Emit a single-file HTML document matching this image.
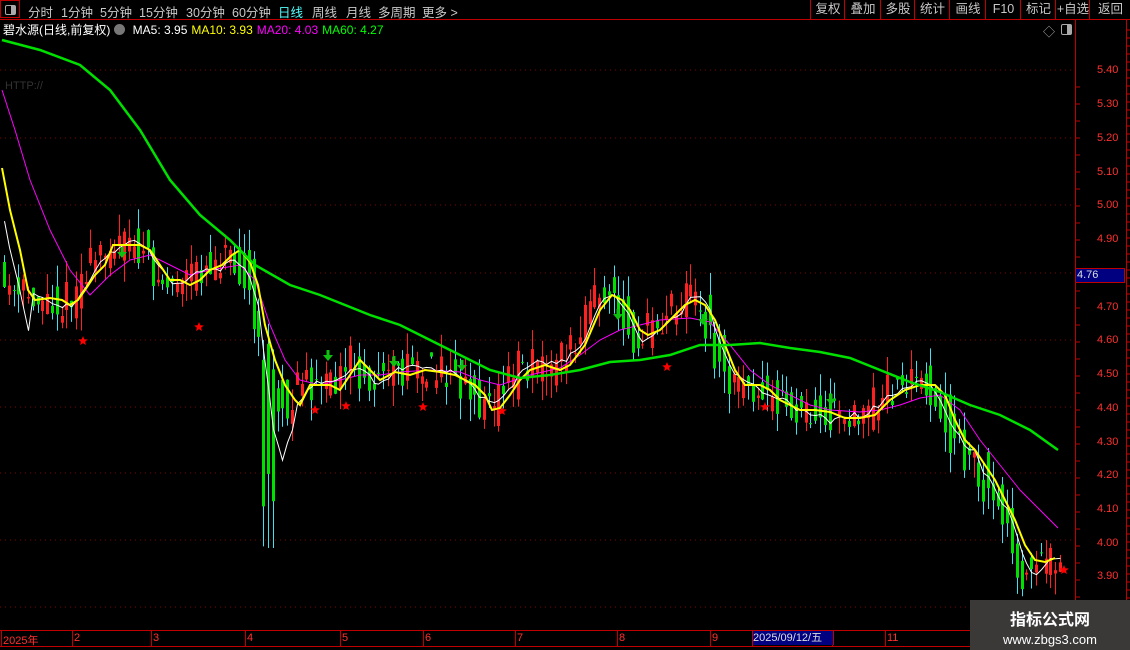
<!DOCTYPE html>
<html><head><meta charset="utf-8">
<style>
html,body{margin:0;padding:0;background:#000;width:1130px;height:650px;overflow:hidden;font-family:"Liberation Sans","Noto Sans CJK SC",sans-serif}
#top{position:absolute;left:0;top:0;width:1130px;height:19px;border-bottom:1px solid #c00000}
.t{position:absolute;top:2px;font-size:12.5px;color:#c8c8c8;white-space:nowrap}
.btn{position:absolute;top:0;height:19px;border-left:1px solid #c00000;color:#c8c8c8;font-size:12.5px;text-align:center;line-height:19px}
#info{position:absolute;left:3px;top:21px;font-size:12px;white-space:nowrap;color:#fff}
#info span{margin-right:4px}
.ax{position:absolute;font-size:11px;color:#ff3030;left:1097px}
.m{position:absolute;top:632px;font-size:11px;color:#ff3030}
</style></head><body>
<div id="top">
<div style="position:absolute;left:0;top:0;width:20px;height:18px;border:1px solid #c00000;box-sizing:border-box"><div style="position:absolute;left:4px;top:4px;width:9px;height:8px;border:1px solid #aaa;border-radius:2px"><div style="position:absolute;right:0;top:0;width:4px;height:8px;background:#aaa"></div></div></div>
<div class="t" style="left:28px">分时</div><div class="t" style="left:61px">1分钟</div><div class="t" style="left:100px">5分钟</div><div class="t" style="left:139px">15分钟</div><div class="t" style="left:186px">30分钟</div><div class="t" style="left:232px">60分钟</div><div class="t" style="left:278px;color:#5ff">日线</div><div class="t" style="left:312px">周线</div><div class="t" style="left:346px">月线</div><div class="t" style="left:378px">多周期</div><div class="t" style="left:422px">更多 &gt;</div>
<div class="btn" style="left:810px;width:34px">复权</div><div class="btn" style="left:844px;width:36px">叠加</div><div class="btn" style="left:880px;width:34px">多股</div><div class="btn" style="left:914px;width:35px">统计</div><div class="btn" style="left:949px;width:36px">画线</div><div class="btn" style="left:985px;width:35px">F10</div><div class="btn" style="left:1020px;width:35px">标记</div><div class="btn" style="left:1055px;width:34px">+自选</div><div class="btn" style="left:1089px;width:41px">返回</div>
</div>
<div id="info"><span>碧水源(日线,前复权)</span><span style="display:inline-block;width:11px;height:11px;border-radius:6px;background:#777;vertical-align:-1px"></span> <span>MA5: 3.95</span><span style="color:#ff0">MA10: 3.93</span><span style="color:#f0f">MA20: 4.03</span><span style="color:#0f0">MA60: 4.27</span></div>
<div style="position:absolute;left:1043px;top:23px;color:#aaa;font-size:12px">◇</div>
<div style="position:absolute;left:1061px;top:24px;width:9px;height:9px;border:1px solid #aaa;border-radius:2px"><div style="position:absolute;right:0;top:0;width:4px;height:9px;background:#aaa"></div></div>
<div style="position:absolute;left:5px;top:80px;color:#333;font-size:11px">HTTP://</div>
<svg id="c" width="1130" height="650" style="position:absolute;left:0;top:0"></svg>
<div class="ax" style="top:64px">5.40</div><div class="ax" style="top:98px">5.30</div><div class="ax" style="top:132px">5.20</div><div class="ax" style="top:166px">5.10</div><div class="ax" style="top:199px">5.00</div><div class="ax" style="top:233px">4.90</div><div class="ax" style="top:301px">4.70</div><div class="ax" style="top:334px">4.60</div><div class="ax" style="top:368px">4.50</div><div class="ax" style="top:402px">4.40</div><div class="ax" style="top:436px">4.30</div><div class="ax" style="top:469px">4.20</div><div class="ax" style="top:503px">4.10</div><div class="ax" style="top:537px">4.00</div><div class="ax" style="top:570px">3.90</div>
<div style="position:absolute;left:1075px;top:268px;width:50px;height:15px;background:#000080;border:1px solid #c00000;box-sizing:border-box;color:#ddd;font-size:11px;line-height:13px;padding-left:1px">4.76</div>
<div class="m" style="left:3px">2025年</div><div class="m" style="left:74px">2</div><div class="m" style="left:153px">3</div><div class="m" style="left:247px">4</div><div class="m" style="left:342px">5</div><div class="m" style="left:425px">6</div><div class="m" style="left:517px">7</div><div class="m" style="left:619px">8</div><div class="m" style="left:712px">9</div>
<div style="position:absolute;left:752px;top:631px;width:80px;height:14px;background:#000080;color:#ddd;font-size:11px;line-height:14px;border-left:1px solid #c00000;border-right:1px solid #c00000">2025/09/12/五</div>
<div class="m" style="left:887px">11</div>
<div style="position:absolute;left:970px;top:600px;width:160px;height:50px;background:#3b3838"><div style="text-align:center;color:#fff;font-weight:bold;font-size:16px;margin-top:6px">指标公式网</div><div style="text-align:center;color:#fff;font-size:13px;margin-top:2px">www.zbgs3.com</div></div>
<script>
var NS="http://www.w3.org/2000/svg",S=document.getElementById('c');
function el(n,a){var e=document.createElementNS(NS,n);for(var k in a)e.setAttribute(k,a[k]);S.appendChild(e);return e}
[70,138,205,273,340,407,473,540,607].forEach(function(y){el('line',{x1:0,x2:1075,y1:y,y2:y,stroke:'#800000','stroke-dasharray':'1,4'})});
el('line',{x1:1075.5,x2:1075.5,y1:20,y2:630,stroke:'#c00000'});
el('line',{x1:1126.5,x2:1126.5,y1:20,y2:650,stroke:'#c00000'});
el('line',{x1:0,x2:1130,y1:630.5,y2:630.5,stroke:'#c00000'});
el('line',{x1:0,x2:1130,y1:646.5,y2:646.5,stroke:'#c00000'});
[1,72,151,245,340,423,515,617,710,752,832,885].forEach(function(x){el('line',{x1:x+.5,x2:x+.5,y1:630,y2:646,stroke:'#c00000'})});
for(var y=87;y<620;y+=17)el('line',{x1:1075,x2:1080,y1:y,y2:y,stroke:'#c00000'});
for(var y=30;y<630;y+=8)el('line',{x1:1126,x2:1130,y1:y,y2:y,stroke:'#c00000'});
function P(s){return s.trim().split(/\s+/).map(function(p){return p.split(',').map(Number)})}
var Y=P("2,168 10,210 20,250 28,290 35,300 50,298 62,300 70,305 78,300 85,290 95,275 105,265 113,245 125,245 140,245 150,250 160,265 170,280 180,280 190,285 200,280 210,270 222,265 232,255 240,250 250,262 258,285 265,325 275,360 285,385 295,400 300,405 310,385 320,385 330,385 340,390 350,375 360,360 370,370 380,380 395,372 410,375 425,370 440,372 455,375 465,380 475,385 485,395 492,410 500,408 510,395 520,380 530,370 545,365 560,370 570,365 585,345 600,310 612,295 622,300 630,310 640,330 648,335 660,330 672,318 685,305 695,300 705,305 715,320 725,345 735,370 745,385 760,385 770,390 780,400 790,405 800,410 815,410 830,412 845,418 860,418 875,415 890,400 905,390 920,385 935,385 945,395 955,420 965,440 975,450 985,465 995,480 1005,500 1015,520 1025,545 1035,560 1045,562 1055,558");
var G=P("2,40 40,50 80,65 110,90 140,130 170,180 200,215 230,240 255,265 290,285 320,295 345,305 370,315 400,325 430,340 460,355 490,370 520,378 550,375 580,370 610,362 640,360 670,355 700,345 730,345 760,343 790,348 820,352 850,358 880,370 910,382 940,392 970,405 1000,415 1030,430 1058,450");
var M=P("2,90 15,130 30,180 50,230 70,270 90,295 110,275 130,260 150,255 170,265 190,275 210,270 240,265 255,280 270,325 285,360 300,380 320,385 340,380 360,375 380,375 400,372 430,370 460,372 480,380 500,385 530,375 560,368 580,355 600,340 620,330 640,325 660,320 690,318 710,322 730,345 750,370 770,385 790,395 810,405 830,410 860,412 880,410 900,405 920,398 940,395 960,410 980,440 1000,465 1020,490 1040,510 1058,528");
function at(A,x){if(x<=A[0][0])return A[0][1];for(var i=1;i<A.length;i++)if(x<=A[i][0]){var a=A[i-1],b=A[i];return a[1]+(b[1]-a[1])*(x-a[0])/(b[0]-a[0])}return A[A.length-1][1]}
var seed=11;function r(){seed=(seed*16807)%2147483647;return seed/2147483647}
function cb(x){if(x<40)return 295+(x<10?-10:0);if(x>1020)return 565;return at(Y,x+8)}
var closes=[],xs=[];
for(var x=3;x<1060;x+=4.8){
 var b=cb(x),ahead=cb(x+8)-cb(x-8);
 var o=b+(r()-.5)*38-ahead*.4,c=b+(r()-.5)*38+ahead*.4;
 var hi=Math.min(o,c)-r()*22,lo=Math.max(o,c)+r()*22;
 if(x>258&&x<272){o=330+r()*40;c=o+100+r()*60;hi=o-20;lo=c+40;if(x>264)lo=548;}
 var up=c<o,col=up?'#ff2020':'#00e000',wc=up?'#ff2020':'#40e0f0';
 var xi=Math.round(x);
 el('line',{x1:xi+1.5,x2:xi+1.5,y1:hi,y2:lo,stroke:wc});
 el('rect',{x:xi,y:Math.min(o,c),width:3,height:Math.max(1,Math.abs(o-c)),fill:col});
 closes.push(c);xs.push(xi+1.5);
}
var w=[];for(var i=0;i<closes.length;i++){var s=0,n=0;for(var j=Math.max(0,i-4);j<=i;j++){s+=closes[j];n++}var v=s/n;if(xs[i]<30)v=at(Y,xs[i])+40;w.push(xs[i]+','+v.toFixed(1))}
el('polyline',{points:M.map(String).join(' '),fill:'none',stroke:'#f0f','stroke-width':1});
el('polyline',{points:w.join(' '),fill:'none',stroke:'#fff','stroke-width':1});
el('polyline',{points:Y.map(String).join(' '),fill:'none',stroke:'#ff0','stroke-width':2});
el('polyline',{points:G.map(String).join(' '),fill:'none',stroke:'#00e000','stroke-width':2.5});
function star(x,y){var p=[];for(var i=0;i<10;i++){var a=Math.PI/5*i-Math.PI/2,rr=i%2?2.2:5;p.push((x+rr*Math.cos(a)).toFixed(1)+','+(y+rr*Math.sin(a)).toFixed(1))}el('polygon',{points:p.join(' '),fill:'#f00'})}
[[83,341],[199,327],[315,410],[346,406],[423,407],[502,411],[667,367],[765,407],[1064,570]].forEach(function(s){star(s[0],s[1])});
function arr(x,y){el('polygon',{points:(x-1.5)+','+(y-8)+' '+(x+1.5)+','+(y-8)+' '+(x+1.5)+','+(y-3)+' '+(x+5)+','+(y-3)+' '+x+','+(y+3)+' '+(x-5)+','+(y-3)+' '+(x-1.5)+','+(y-3),fill:'#10c010'})}
[[122,255],[328,358],[394,364],[462,368],[618,317],[703,322],[831,402]].forEach(function(a){arr(a[0],a[1])});
</script>
</body></html>
